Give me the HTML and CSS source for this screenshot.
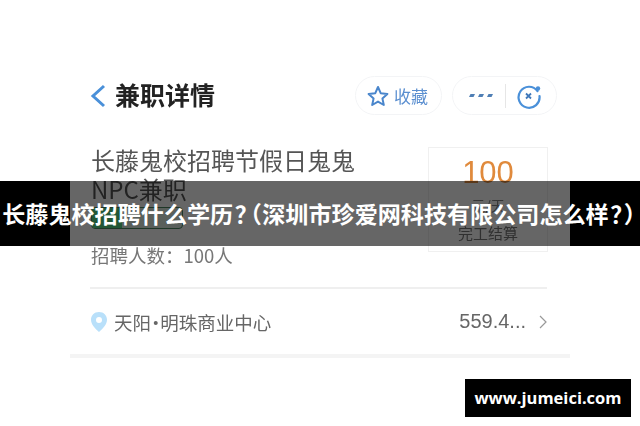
FILE: index.html
```html
<!DOCTYPE html>
<html lang="zh-CN">
<head>
  <meta charset="UTF-8">
  <meta name="viewport" content="width=device-width, initial-scale=1.0">
  <title>长藤鬼校招聘什么学历？</title>
  <link rel="stylesheet" href="styles.css">
</head>
<body>
  <div id="shot">
    <div class="top-bar">
      <svg class="back-icon" width="16" height="24" viewBox="0 0 16 24"><path d="M14 2 L3 12 L14 22" fill="none" stroke="#4a90d9" stroke-width="3"/></svg>
      <h1>兼职详情</h1>
      <div class="pill fav-pill">
        <svg width="22" height="22" viewBox="0 0 22 22"><path d="M11 2 L13.7 8.2 L20.4 8.9 L15.4 13.4 L16.8 20 L11 16.6 L5.2 20 L6.6 13.4 L1.6 8.9 L8.3 8.2 Z" fill="none" stroke="#4a86cc" stroke-width="2" stroke-linejoin="round"/></svg>
        <span>收藏</span>
      </div>
      <div class="pill more-pill">
        <svg width="25" height="5" viewBox="0 0 25 5"><path d="M1.500 1 H6 L4.500 4 H0 Z M10.500 1 H15 L13.500 4 H9 Z M19.500 1 H24 L22.500 4 H18 Z" fill="#4f7fb5"/></svg>
        <i class="pill-line"></i>
        <svg width="26" height="26" viewBox="0 0 26 26"><path d="M21.500 8 A10.500 10.500 0 1 0 23.500 13" fill="none" stroke="#4a90d9" stroke-width="2.200" stroke-linecap="round"/><circle cx="22" cy="5.500" r="2.200" fill="#4a90d9"/><path d="M10 10.500 L15 15.500 M15 10.500 L10 15.500" stroke="#3f78ba" stroke-width="1.800"/></svg>
      </div>
    </div>

    <div class="job">
      <div class="job-info">
        <div class="job-name">长藤鬼校招聘节假日鬼鬼<br>NPC兼职</div>
        <div class="job-tag"><b></b></div>
        <div class="job-count">招聘人数：100人</div>
      </div>
      <div class="pay-box">
        <div class="pay-num">100</div>
        <div class="pay-unit">元/天</div>
        <div class="pay-type">完工结算</div>
      </div>
    </div>

    <div class="place">
      <svg width="18" height="22" viewBox="0 0 18 22"><path fill-rule="evenodd" d="M9 1 C4.200 1 1 4.500 1 8.800 C1 13.500 5.500 18 9 21 C12.500 18 17 13.500 17 8.800 C17 4.500 13.800 1 9 1 Z M9 6 A3 3 0 1 1 9 12 A3 3 0 1 1 9 6 Z" fill="#b9e0fa"/></svg>
      <span class="place-name">天阳·明珠商业中心</span>
      <span class="place-dist">559.4...</span>
      <svg width="8" height="14" viewBox="0 0 8 14"><path d="M1 1 L7 7 L1 13" fill="none" stroke="#999" stroke-width="1.200"/></svg>
    </div>
    <div class="gap-bar"></div>
  </div>

  <div id="banner">长藤鬼校招聘什么学历<span class="punct">？</span><span class="punct">（</span>深圳市珍爱网科技有限公司怎么样<span class="punct">？</span><span class="punct">）</span></div>
  <div id="siteMark">www.jumeici.com</div>
</body>
</html>
```

FILE: styles.css
```css
html, body {
  margin: 0;
  height: 426px;
  overflow: hidden;
  background-color: #fff;
}

body {
  position: relative;
  font-family: "Noto Sans CJK SC", "Liberation Sans", sans-serif;
  color: #555;
}

#shot {
  width: 500px;
  margin: 0 auto;
  padding-top: 76px;
  filter: blur(0.4px);
}

.top-bar {
  display: flex;
  align-items: center;
  height: 39px;
  padding: 0 13px 0 20px;
}

.back-icon {
  margin-right: 9px;
}

h1 {
  margin: -4px 0 0 0;
  flex: 1;
  font-size: 25px;
  font-weight: 700;
  color: #222;
}

.pill {
  display: flex;
  align-items: center;
  box-sizing: border-box;
  height: 39px;
  border: 1px solid #f3f4f6;
  border-radius: 20px;
}

.fav-pill {
  width: 87px;
  padding-left: 11px;
  gap: 5px;
  font-size: 17px;
  color: #5b8fd0;
}

.more-pill {
  width: 105px;
  margin-left: 10px;
  padding-left: 16px;
}

.pill-line {
  width: 1px;
  height: 24px;
  margin: 0 10px 0 11px;
  background-color: #e6e6e6;
}

.job {
  display: flex;
  justify-content: space-between;
  padding: 30px 22px 0 21px;
  height: 142px;
}

.job-name {
  font-size: 24px;
  line-height: 29px;
  color: #555;
}

.job-tag {
  width: 90px;
  height: 20px;
  margin-top: 4px;
  border: 1px solid #4d8a63;
  border-radius: 4px;
  background-color: #dfeee4;
  overflow: hidden;
}

.job-tag b {
  display: block;
  width: 30px;
  height: 100%;
  background-color: #55d888;
}

.job-count {
  margin-top: 14px;
  font-size: 18.500px;
  line-height: 24px;
  color: #777;
}

.pay-box {
  box-sizing: border-box;
  width: 120px;
  height: 105px;
  margin-top: 2px;
  border: 1px solid #f0f0f0;
  text-align: center;
}

.pay-num {
  margin-top: 5px;
  font-family: "Liberation Sans", sans-serif;
  font-size: 31px;
  line-height: 40px;
  color: #e08a3c;
}

.pay-unit {
  font-size: 14px;
  line-height: 20px;
  margin-top: 2px;
  color: #888;
}

.pay-type {
  font-size: 15px;
  line-height: 20px;
  margin-top: 8px;
  color: #777;
}

.place {
  display: flex;
  align-items: center;
  height: 67px;
  margin: 0 23px 0 20px;
  border-top: 2px solid #efefef;
  box-sizing: border-box;
}

.place-name {
  flex: 1;
  margin-left: 6px;
  font-size: 18.500px;
  font-feature-settings: "palt";
  color: #666;
}

.place-dist {
  margin-right: 13px;
  font-family: "Liberation Sans", sans-serif;
  font-size: 20px;
  color: #666;
}

.gap-bar {
  height: 4px;
  background-color: #f4f4f4;
}

/* over the screenshot */
#banner {
  position: absolute;
  top: 181px;
  left: 0;
  width: 640px;
  height: 65px;
  line-height: 65px;
  background: linear-gradient(to right, #000 70px, rgba(0, 0, 0, 0.6) 70px, rgba(0, 0, 0, 0.6) 570px, #000 570px);
  color: #fff;
  font-size: 23.100px;
  font-weight: 700;
  font-feature-settings: "palt";
  text-align: center;
  white-space: nowrap;
}

.punct {
  margin: 0 1.500px;
}

#siteMark {
  position: absolute;
  top: 379px;
  left: 465px;
  width: 166px;
  height: 38px;
  line-height: 38px;
  background-color: #000;
  color: #fff;
  font-family: "Open Sans", sans-serif;
  font-size: 16.500px;
  font-weight: 700;
  text-align: center;
}
```
